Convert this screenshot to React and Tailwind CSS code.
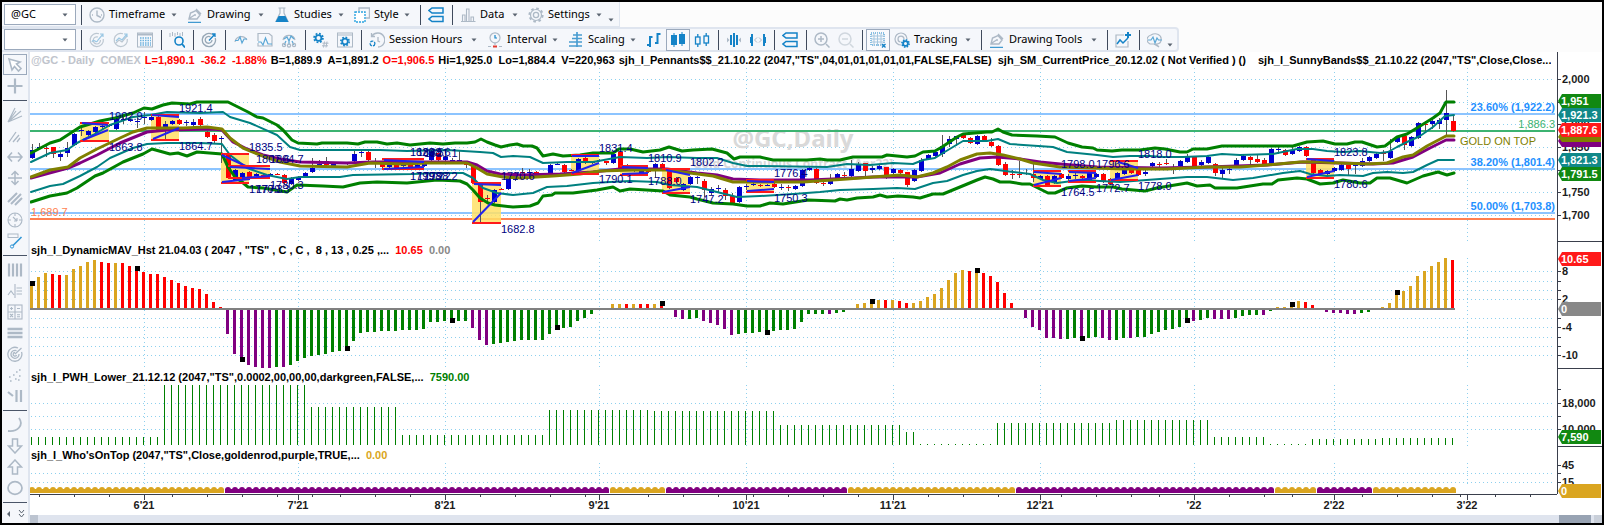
import React from 'react';

const GRAY = '#adb9c6';
const BLUE = '#1583c7';

const icons = {
  clock: (
    <g stroke={GRAY} strokeWidth="1.4">
      <circle cx="8" cy="8" r="7" />
      <path d="M8 3.5V8.5L12 10.5M3 8h1M12 8h1" />
    </g>
  ),
  pen: (
    <g>
      <path d="M2 12L3.5 6L9 3.5L13 8L10 12ZM9 2L14 7M3 11L7.5 8" stroke={GRAY} strokeWidth="1.4" />
      <circle cx="8" cy="8" r="1" fill={GRAY} />
      <path d="M1 15.3H14" stroke={BLUE} />
    </g>
  ),
  flask: (
    <g>
      <path d="M6 1V6L2 14.5H14L10 6V1M4.5 1H11.5" stroke={GRAY} strokeWidth="1.2" />
      <path d="M4.6 9H11.4L14.5 15H1.5Z" fill={BLUE} />
    </g>
  ),
  style: (
    <g>
      <path d="M5 4V1H15.5V11H12" stroke={GRAY} strokeWidth="1.4" />
      <rect x="1" y="5" width="10" height="10" fill="#fff" stroke="#2ba3e0" strokeWidth="1.4" strokeDasharray="2 1" />
    </g>
  ),
  stack: (
    <path d="M4 1H15V6H4L1 3.5ZM4 9.5H15V14.5H4L1 12Z" stroke={BLUE} strokeWidth="1.5" />
  ),
  data: (
    <path d="M1 14.5H15.5M2.5 14V8H5V14M6.5 14V2H9V14M11 14V10H13.5V14" stroke={GRAY} strokeWidth="1.1" />
  ),
  gear: (
    <g stroke={GRAY}>
      <circle cx="8" cy="8" r="6.6" strokeWidth="2" strokeDasharray="2.6 2.58" />
      <circle cx="8" cy="8" r="5.5" strokeWidth="1.2" />
      <circle cx="8" cy="8" r="2.6" strokeWidth="1.3" />
    </g>
  ),
  gauge: (
    <g stroke="#bcc7d1" strokeWidth="1.2">
      <path d="M10 1.8A6.6 6.6 0 1 0 14.3 7" />
      <path d="M9 5A3.6 3.6 0 1 0 11.4 8" />
      <path d="M3 10C5 5 7 13 9 8L14 2M11 2H14V5" stroke="#9cc8e4" />
    </g>
  ),
  gaugeLine: (
    <g stroke="#bcc7d1" strokeWidth="1.2">
      <path d="M10 1.8A6.6 6.6 0 1 0 14.3 7M2 12L6 8L9 10L14 4" />
      <path d="M3 9L6 6L9 8L14 2M11 2H14V5" stroke="#9cc8e4" />
    </g>
  ),
  sheet: (
    <g>
      <rect x="0.5" y="1" width="15" height="14" stroke={GRAY} />
      <path d="M1 2.5H15" stroke={GRAY} strokeWidth="2" />
      <path d="M3 6H14M3 8.5H14M3 11H14M3 13H14" stroke="#6db3de" strokeWidth="1.5" strokeDasharray="1.5 1" />
    </g>
  ),
  findBars: (
    <g>
      <path d="M1 1V5M3.5 0V4M6 1V5M8.5 0V3M11 1V4M13.5 0V4" stroke={GRAY} />
      <circle cx="10" cy="9" r="4" stroke={BLUE} strokeWidth="1.6" />
      <path d="M13 12L16 15.5" stroke={BLUE} strokeWidth="1.8" />
    </g>
  ),
  target: (
    <g stroke="#97a7b6" strokeWidth="1.3">
      <path d="M11 2.2A6.6 6.6 0 1 0 14.2 6" />
      <path d="M9.5 5A3.4 3.4 0 1 0 11 8" />
      <path d="M8 8.5L14 2M11 2L14 2V5" stroke={BLUE} />
    </g>
  ),
  pulse: (
    <g strokeWidth="1.2">
      <path d="M2 10A6.4 6.4 0 0 1 14 8" stroke={GRAY} />
      <path d="M2 8.5H5L7 5L9 11L11 7H14" stroke="#5aa7d6" />
    </g>
  ),
  pulseBox: (
    <g strokeWidth="1.2">
      <path d="M1 9V1.5H12L15 4V14H1V11" stroke={GRAY} />
      <path d="M1 10H4L6 13L8.5 6L11 12H15" stroke="#5aa7d6" />
    </g>
  ),
  pulseNet: (
    <g strokeWidth="1.2">
      <path d="M2 8A6.2 6.2 0 0 1 14 8" stroke={GRAY} />
      <path d="M3 7L6 5L8 9L10 4L13 7M8 9V13M3 13L5 9M13 13L11 9" stroke="#5aa7d6" />
      <circle cx="3" cy="13" r="1.6" stroke={GRAY} />
      <circle cx="8" cy="13.5" r="1.6" stroke={GRAY} />
      <circle cx="13" cy="13" r="1.6" stroke={GRAY} />
    </g>
  ),
  gearHash: (
    <g>
      <circle cx="5.5" cy="6" r="4.4" stroke={BLUE} strokeWidth="1.8" strokeDasharray="1.8 1.65" />
      <circle cx="5.5" cy="6" r="2.9" stroke={BLUE} strokeWidth="1.8" />
      <path d="M11.5 9.5L10.5 15.5M14 9.5L13 15.5M9.5 11.2H15.5M9 13.8H15" stroke={GRAY} />
    </g>
  ),
  gearSheet: (
    <g>
      <rect x="0.5" y="1" width="15" height="14" stroke={GRAY} />
      <path d="M1 3H15" stroke={GRAY} />
      <circle cx="8" cy="9.5" r="4.2" stroke={BLUE} strokeWidth="1.6" strokeDasharray="1.7 1.6" />
      <circle cx="8" cy="9.5" r="2.8" stroke={BLUE} strokeWidth="1.8" />
    </g>
  ),
  session: (
    <g strokeWidth="1.3">
      <path d="M3 4A7 7 0 1 1 9 15M2.5 1V4.5H6" stroke={GRAY} />
      <path d="M9 5V9L11 10" stroke={GRAY} />
      <circle cx="3.5" cy="11.5" r="2.4" stroke={BLUE} strokeDasharray="3 1" />
    </g>
  ),
  interval: (
    <g strokeWidth="1.2">
      <circle cx="8" cy="5.8" r="5" stroke={GRAY} />
      <path d="M8 3V6H10" stroke={BLUE} />
      <path d="M8 11V13M1 14.5H4M12 14.5H15" stroke={GRAY} />
      <path d="M6 14.5H10" stroke="#e23b30" strokeWidth="2" />
    </g>
  ),
  scaling: (
    <g stroke={BLUE} strokeWidth="1.3">
      <path d="M9 0V15" />
      <path d="M5 3H14M4 6.5H14M1 10H14M1 14H14" stroke="#4a9dcf" />
    </g>
  ),
  barsOhlc: (
    <path d="M4 4V15M1 13H4M4 5H6.5M11.5 1V12M9 11H11.5M11.5 2H14.5" stroke={BLUE} strokeWidth="2" />
  ),
  candlesFull: (
    <g stroke={BLUE}>
      <path d="M4 1V15M12 0V14" />
      <rect x="2" y="4" width="4" height="8" fill={BLUE} strokeWidth="2" />
      <rect x="10" y="3" width="4" height="8" fill={BLUE} strokeWidth="2" />
    </g>
  ),
  candlesHollow: (
    <g stroke={BLUE} strokeWidth="1.3">
      <rect x="1.5" y="5" width="4.5" height="7" />
      <rect x="10" y="4" width="4.5" height="7" />
      <path d="M3.8 2V5M3.8 12V15M12.2 1V4M12.2 11V14" />
    </g>
  ),
  squeeze: (
    <g>
      <path d="M5 3V13M8 1V15M11 3V13" stroke={BLUE} strokeWidth="2" />
      <path d="M1 5.5L3.5 8L1 10.5ZM15 5.5L12.5 8L15 10.5Z" fill={GRAY} />
    </g>
  ),
  spread: (
    <g>
      <path d="M2 2V14M14 2V14M0.5 5V11M15.5 5V11" stroke={BLUE} strokeWidth="2" />
      <path d="M7 5.5L4.5 8L7 10.5M9 5.5L11.5 8L9 10.5" stroke={GRAY} />
    </g>
  ),
  zoomIn: (
    <g stroke={GRAY} strokeWidth="1.5">
      <circle cx="7" cy="7" r="6" />
      <path d="M12 12L15.5 15.5M4 7H10M7 4V10" />
    </g>
  ),
  zoomOut: (
    <g stroke="#d0d7de" strokeWidth="1.5">
      <circle cx="7" cy="7" r="6" />
      <path d="M12 12L15.5 15.5M4 7H10" />
    </g>
  ),
  grid: (
    <g>
      <rect x="1" y="1" width="13" height="12" stroke={BLUE} strokeDasharray="1 1" />
      <path d="M4 1V14M7.5 1V14M11 1V14M1 4H15M1 7H15M1 10H15" stroke="#a5c6de" />
      <path d="M12 12L15.5 15.5M15.5 12L12 15.5" stroke={BLUE} strokeWidth="1.3" />
    </g>
  ),
  tracking: (
    <g>
      <path d="M7 13A6 6 0 1 1 13 7M6.5 10A3 3 0 1 1 10 7" stroke={GRAY} strokeWidth="1.2" />
      <circle cx="11.5" cy="11.5" r="3.6" stroke={BLUE} strokeWidth="1.6" strokeDasharray="1.5 1.3" />
      <circle cx="11.5" cy="11.5" r="2.4" stroke={BLUE} strokeWidth="1.8" />
    </g>
  ),
  addChart: (
    <g>
      <path d="M9 3H1V15H13V9" stroke={GRAY} strokeWidth="1.2" />
      <path d="M2 12L5 8L8 11L13 6" stroke={BLUE} strokeWidth="1.5" />
      <path d="M13 0V6M10 3H16" stroke={BLUE} strokeWidth="2" />
    </g>
  ),
  chat: (
    <g strokeWidth="1.2">
      <path d="M3 12A6 5 0 0 1 4 3C9 0 15 3 14 8C14 10 13 12 9 12L12 15L7 12Z" stroke={GRAY} />
      <path d="M1 8H4L6 5L8 11L10 6L11.5 8H15" stroke="#5aa7d6" />
    </g>
  ),
  pointer: (
    <path d="M2 2L13 5L9.5 7L14 11.5L11.5 14L7.5 9.5L5 13Z" fill="#fff" stroke={GRAY} strokeWidth="1.6" />
  ),
  cross: <path d="M8 0.5V15.5M0.5 8H15.5" stroke={GRAY} strokeWidth="2.2" />,
  rays: (
    <path d="M1 15L8 1M1 15L14 4M1 15L15 9M1 15L9 4" stroke={GRAY} strokeWidth="1.2" />
  ),
  fan: <path d="M2 14L9 4M6 14L12 7M10 14L13 10" stroke={GRAY} strokeWidth="1.3" />,
  horiz: <path d="M1 8H15M5 3.5L1 8L5 12.5M11 3.5L15 8L11 12.5" stroke={GRAY} strokeWidth="1.6" />,
  vert: (
    <path d="M8 2V14M4.5 5L8 1.5L11.5 5M4.5 11L8 14.5L11.5 11M1 8H15" stroke={GRAY} strokeWidth="1.5" />
  ),
  parallels: <path d="M1 11L10 2M4 13L14 3M8 14L15 7" stroke={GRAY} strokeWidth="2" />,
  compass: (
    <g stroke={GRAY} strokeWidth="1.1">
      <circle cx="8" cy="8" r="7" />
      <path d="M8 1V4M8 12V15M1 8H4M12 8H15M6 5L10 9M10 9V6M10 9H7" />
    </g>
  ),
  brush: (
    <g>
      <rect x="1" y="1" width="10" height="3.5" stroke={GRAY} />
      <path d="M14.5 4L6 12.5" stroke="#2f95d6" strokeWidth="1.6" />
      <circle cx="5" cy="13.5" r="1.6" stroke="#2f95d6" />
    </g>
  ),
  columns: <path d="M2 1.5V14.5M6 1.5V14.5M10 1.5V14.5M14 1.5V14.5" stroke={GRAY} strokeWidth="2.2" />,
  levels: (
    <path d="M1 12L4 8L7 12M8 1V15M9.5 5H15M9.5 8H15M9.5 11H15" stroke={GRAY} strokeWidth="1.1" />
  ),
  calc: (
    <g stroke={GRAY} strokeWidth="1.1">
      <rect x="1" y="1" width="14" height="14" />
      <path d="M8 1V15M1 8H15M3 4.5H6M4.5 3V6M10 4.5H13M3 10L6 13M6 10L3 13M10 10.7H13M10 12.7H13" />
    </g>
  ),
  rows: <path d="M0.5 4H15.5M0.5 8H15.5M0.5 12H15.5" stroke={GRAY} strokeWidth="2.4" />,
  radar: (
    <g stroke={GRAY} strokeWidth="1.3">
      <path d="M11 2A7 7 0 1 0 14.5 6M9.5 4.6A4 4 0 1 0 12 8" />
      <path d="M8 8L14.5 2M8 6.5A1.8 1.8 0 1 0 9.6 9" />
    </g>
  ),
  dots: (
    <path
      d="M2 10h1.6M3 14h1.6M6 8h1.6M8 12h1.6M9 5h1.6M12 3h1.6M12 9h1.6M11 13h1.6"
      stroke={GRAY}
      strokeWidth="1.6"
    />
  ),
  slashBars: <path d="M1 4L6 8M9.5 2V14M14 2V14" stroke={GRAY} strokeWidth="2.2" />,
  arc: <path d="M12 1C17 8 11 15 1 14" stroke={GRAY} strokeWidth="1.8" />,
  down: <path d="M5.5 1H10.5V8H14.5L8 15L1.5 8H5.5Z" stroke={GRAY} strokeWidth="1.5" />,
  up: <path d="M5.5 15H10.5V8H14.5L8 1L1.5 8H5.5Z" stroke={GRAY} strokeWidth="1.5" />,
  ellipse: <ellipse cx="8" cy="8" rx="7" ry="6.3" stroke={GRAY} strokeWidth="1.7" />,
};

const Icon = ({ name }) => (
  <svg viewBox="0 0 16 16" className="size-4 shrink-0" fill="none" aria-hidden="true">
    {icons[name]}
  </svg>
);

const Caret = () => (
  <svg viewBox="0 0 6 4" className="w-1.5 h-1 shrink-0" aria-hidden="true">
    <path d="M0.5 0.5H5.5L3 3.5Z" fill="#5a6470" />
  </svg>
);

const Sep = () => (
  <div className="w-2 flex justify-center shrink-0">
    <div className="w-px h-5 bg-[#3f4a5c]" />
  </div>
);

const IconButton = ({ name, label, active }) => (
  <button
    type="button"
    aria-label={label}
    className={`w-6 h-[22px] flex items-center justify-center shrink-0 ${
      active ? 'border border-[#9ba9bc] bg-[#f8f9fc]' : ''
    }`}
  >
    <Icon name={name} />
  </button>
);

const MenuButton = ({ name, label, width }) => (
  <button type="button" className={`${width} h-[22px] flex items-center gap-1 pl-1 pr-1.5 shrink-0 whitespace-nowrap`}>
    <Icon name={name} />
    <span>{label}</span>
    <span className="ml-auto">
      <Caret />
    </span>
  </button>
);

const Combo = ({ label, value }) => (
  <div className="relative w-[72px] mr-px shrink-0">
    <select
      aria-label={label}
      defaultValue={value}
      className="block w-full h-[21px] appearance-none border border-[#9ba9bc] bg-white pl-1.5 text-[11px] outline-none"
    >
      <option>{value}</option>
    </select>
    <span className="pointer-events-none absolute right-2 inset-y-0 flex items-center">
      <Caret />
    </span>
  </div>
);

const Overflow = () => (
  <button type="button" aria-label="More" className="w-3 h-[22px] flex items-end pb-1 shrink-0">
    <Caret />
  </button>
);

const BAR = 7;
const barX = (i) => 32 + i * BAR;

const months = [
  [144, "6'21"], [298, "7'21"], [445, "8'21"], [599, "9'21"], [746, "10'21"],
  [893, "11'21"], [1040, "12'21"], [1194, "'22"], [1334, "2'22"], [1467, "3'22"],
];

const weeks = [
  39, 74, 109, 172, 207, 242, 277, 312, 340, 375, 410, 480, 515, 550, 585, 648, 683, 718, 753, 788, 823, 858,
  928, 963, 998, 1061, 1096, 1131, 1159, 1229, 1264, 1292, 1362, 1397, 1432, 1460, 1495, 1530,
];

const bands = [
  { color: '#008080', width: 2, points: '31,162 50,153 67,150 77,143 93,135 110,125 133,117 150,115 167,112 200,113 223,112 230,117 250,123 277,135 290,147 300,150 380,150 407,151 447,150 480,152 493,153 501,157 513,156 530,157 543,163 567,162 593,162 620,157 647,158 667,157 697,158 717,158 733,163 747,166 760,166 827,167 847,164 870,165 893,163 913,164 923,160 935,158 943,153 963,141 987,141 998,139 1010,144 1053,147 1067,152 1097,155 1113,157 1130,156 1150,156 1163,157 1183,157 1207,156 1222,154 1240,155 1273,154 1297,149 1313,149 1327,151 1343,152 1360,151 1380,153 1388,152 1397,147 1407,142 1420,136 1433,127 1445,116 1454,115' },
  { color: '#008080', width: 2, points: '31,192 50,186 63,184 80,176 97,167 110,158 133,148 147,144 167,143 200,143 222,144 230,155 247,168 267,175 287,179 300,177 340,177 353,175 413,174 437,173 463,173 473,178 483,188 497,193 513,195 533,193 547,187 567,186 593,183 610,182 630,181 657,182 670,185 697,187 717,192 737,197 760,196 793,194 820,192 840,190 873,189 897,188 915,189 933,183 947,181 963,175 977,171 990,169 1013,172 1030,174 1043,180 1057,183 1080,180 1120,182 1160,179 1187,177 1207,177 1233,180 1253,178 1283,173 1300,171 1310,174 1327,176 1340,175 1363,176 1373,173 1387,172 1403,173 1413,172 1427,165 1438,160 1454,160' },
  { color: '#800080', width: 3, points: '31,178 68,168 80,163 97,155 120,143 147,132 167,130 213,129 222,130 233,142 247,149 263,155 280,159 300,162 347,163 373,162 427,162 467,162 477,165 487,171 500,174 520,175 560,174 593,172 620,169 667,169 697,173 717,175 733,179 760,180 810,180 833,179 873,177 897,177 917,177 940,173 960,164 980,158 997,157 1020,159 1040,162 1060,164 1097,167 1160,168 1207,167 1267,165 1303,162 1340,163 1373,164 1393,163 1413,157 1430,148 1446,140 1454,140' },
  { color: '#808000', width: 3, points: '31,177 50,170 68,167 80,158 97,149 120,138 133,132 147,128 183,128 207,127 222,129 230,138 243,148 260,155 280,162 300,166 347,167 370,163 403,164 427,163 467,163 477,168 487,174 503,177 520,178 553,176 580,174 600,171 633,170 667,170 690,173 713,176 733,182 760,182 803,182 847,179 873,177 900,175 917,177 933,173 947,167 960,160 977,154 990,153 1003,155 1020,159 1033,163 1060,167 1093,168 1127,169 1167,169 1207,167 1240,167 1267,165 1300,162 1320,162 1340,163 1367,164 1387,163 1403,157 1413,155 1427,146 1446,136 1454,136' },
  { color: '#008000', width: 3, points: '31,153 50,143 60,140 80,127 100,121 115,118 133,113 144,108 152,109 163,105 172,103 190,104 197,102 228,102 240,108 248,112 257,117 263,118 277,125 283,130 292,140 298,143 317,144 322,143 347,143 358,144 365,142 377,142 387,144 397,143 410,145 430,143 443,144 455,143 467,143 475,142 481,139 487,142 495,145 501,147 510,145 517,144 523,146 532,146 537,148 543,156 553,154 563,156 580,155 593,153 613,153 619,149 630,149 643,152 660,150 669,147 682,151 693,150 712,149 727,153 734,159 740,157 760,157 773,160 807,160 820,159 827,160 840,160 853,157 882,157 887,155 907,157 915,156 923,152 935,151 942,147 957,137 963,134 987,132 992,132 998,129 1003,132 1012,135 1037,136 1055,137 1068,143 1082,147 1093,148 1097,150 1112,151 1122,150 1140,150 1155,148 1165,149 1180,152 1187,152 1193,149 1207,149 1222,146 1293,146 1307,142 1323,141 1335,144 1347,144 1355,142 1362,142 1377,147 1385,146 1397,137 1407,134 1417,128 1433,118 1440,113 1446,102 1454,102' },
  { color: '#008000', width: 3, points: '31,202 50,196 67,193 77,188 95,176 103,173 123,162 143,154 152,149 170,154 178,153 187,156 197,152 222,154 228,167 235,177 242,182 248,187 263,188 287,192 297,185 323,186 343,187 360,183 377,182 407,183 437,180 460,181 467,184 473,190 480,198 488,203 495,205 513,207 530,206 538,203 543,196 552,195 555,193 573,193 597,190 613,187 620,191 630,189 663,191 670,195 690,197 697,199 713,203 733,204 747,206 760,206 770,203 783,204 808,200 835,201 840,199 847,200 857,198 873,197 880,195 887,197 898,196 913,197 920,198 933,194 943,194 960,187 977,180 985,177 993,179 1000,182 1010,182 1022,184 1030,184 1040,189 1048,193 1055,193 1067,188 1082,186 1097,187 1113,187 1122,189 1145,191 1157,188 1187,183 1197,186 1210,185 1215,188 1237,188 1263,184 1272,184 1278,180 1297,178 1307,179 1320,184 1333,183 1343,180 1360,183 1370,183 1377,178 1390,178 1407,183 1423,176 1438,172 1447,175 1454,173' },
];

// one entry per bar: direction, body top, body bottom, optional high and low
const candles = [
  'B 150 158 144', 'B 147 147 143 149', 'R 148 148 146 157', 'R 147 154 147 158', 'B 154 157 152 161', 'B 148 153 142 157',
  'B 134 145 133', 'B 130 130 127 136', 'B 131 135', 'B 127 132', 'B 126 127 122 130', 'B 125 126', 'B 118 129', 'B 119 119 115 124',
  'B 120 121', 'B 121 122 117 128', 'B 117 117 112 124', 'B 117 120', 'R 117 130', 'B 124 127 121 140', 'B 121 124', 'R 120 124',
  'B 122 122 120 126', 'B 122 125 119 129', 'R 119 125 117 129', 'R 132 137', 'R 135 141 133 143', 'B 138 138 136 163', 'R 155 178', 'B 170 180',
  'B 173 178', 'R 172 177', 'B 174 176', 'R 175 175', 'B 174 174', 'R 174 174', 'R 175 183', 'B 178 184', 'B 177 180', 'B 173 176',
  'B 168 172 158', 'B 164 165 160', 'R 161 165 157', 'B 164 167', 'B 167 167', 'B 163 164', 'B 154 161 151', 'B 152 152 150 157',
  'R 152 160', 'R 163 164 158 168', 'R 163 167', 'B 164 167', 'R 165 168', 'B 164 166', 'R 164 167', 'B 165 168', 'B 164 166',
  'B 151 160', 'R 153 160', 'B 157 160', 'B 160 160 158 162', 'B 160 160 150 162', 'R 162 165 161 168', 'R 166 183', 'R 183 202 183 223',
  'R 198 198 195 203', 'B 190 202', 'R 189 189', 'B 178 189', 'B 173 180', 'R 172 173 168 177', 'B 172 172 169 175', 'R 172 175', 'B 174 175',
  'B 165 173', 'B 164 164', 'R 165 172', 'R 170 170', 'B 159 171', 'R 158 163', 'B 162 163', 'B 160 161', 'R 161 163 161 165', 'B 154 163',
  'R 152 168', 'R 165 169', 'R 168 171', 'B 171 174', 'R 170 172', 'B 164 168 163 178', 'R 164 169', 'R 170 188', 'R 178 182', 'B 184 190',
  'B 177 184', 'B 177 178 176 184', 'R 181 190 179 197', 'B 189 193 187 195', 'B 188 189 185 192', 'R 190 196 188 200', 'R 196 203 193', 'B 187 202',
  'B 186 186 184 190', 'B 184 185', 'R 185 186', 'B 185 185', 'R 184 187', 'B 187 187 184 190', 'R 187 187 185 191', 'B 186 189',
  'B 170 186', 'B 168 170', 'R 169 183', 'R 183 184 181 186', 'B 181 184 174', 'B 174 178', 'R 175 175 172 178', 'B 169 176 160', 'B 164 171 162',
  'R 163 171 163 176', 'B 168 170 166 173', 'B 166 169', 'R 167 175 167 179', 'B 169 173', 'R 170 173', 'R 172 185 172 187', 'B 170 181',
  'B 160 171 158', 'B 155 159', 'B 152 156', 'B 146 154 135 157', 'B 139 144 136 147', 'B 136 139 136 146', 'R 135 138', 'R 138 143', 'B 136 144',
  'R 136 141', 'R 142 146 138 147', 'R 146 165', 'R 164 175 162', 'R 174 175 170 179', 'R 174 174 161 178', 'R 173 174 169', 'R 174 178 163 182',
  'B 176 179', 'R 176 185', 'B 176 183', 'R 174 178', 'B 176 179 174 182', 'B 175 176 172 179', 'R 176 178', 'B 173 180', 'B 174 177',
  'R 174 182', 'R 179 184', 'B 173 180', 'B 170 174', 'R 168 173', 'R 170 175', 'B 172 174 169 176', 'B 163 166', 'R 164 164 162 167',
  'R 163 164 159', 'R 167 168 164 174', 'B 161 166', 'B 157 162 154', 'R 157 166', 'B 162 165 160', 'B 157 163', 'R 164 173 163 176', 'B 170 174 168 178',
  'B 169 170 167 174', 'B 160 167 158', 'B 156 160', 'R 157 160 156 165', 'R 159 162 154', 'R 160 165 158', 'B 149 163', 'B 149 149 147 154',
  'R 150 155', 'B 150 154 147', 'B 147 151', 'R 147 156', 'R 160 173', 'R 170 174', 'B 171 174', 'B 168 171', 'B 165 170',
  'R 165 169 165 175', 'B 165 166 163 174', 'B 161 166 158', 'B 157 161', 'B 154 158', 'R 153 154 150 161', 'B 151 158 139', 'B 137 142',
  'R 136 145 136 150', 'B 137 146', 'B 123 138', 'R 124 124 121 131', 'B 121 124 117 129', 'B 120 124 118 129', 'B 113 120 90 137', 'R 121 131 115',
].map((row) => row.split(' '));

// box left, right, top, bottom plus the two converging lines
const pennants = [
  [80, 109, 123, 141, 'M82 123L108 125M83 140L108 130'],
  [151, 179, 115, 140, 'M152 115L179 117M153 139L179 128'],
  [221, 249, 154, 183, 'M222 155L250 168M222 182L250 179'],
  [228, 270, 166, 178, 'M230 167L270 169M242 178L270 176'],
  [382, 424, 159, 169, 'M384 160L424 162M384 169L424 167'],
  [472, 501, 183, 223, 'M474 184L501 185M473 222L501 193'],
  [571, 599, 155, 174, 'M572 156L599 156M572 173L599 163'],
  [620, 648, 166, 175, 'M622 167L648 168M622 174L648 173'],
  [662, 690, 169, 193, 'M666 170L690 175M663 192L690 187'],
  [746, 774, 180, 192, 'M747 181L774 182M747 191L774 189'],
  [1033, 1061, 171, 186, 'M1034 172L1061 174M1034 185L1061 178'],
  [1068, 1096, 171, 182, 'M1069 172L1096 173M1069 181L1096 178'],
  [1110, 1138, 161, 180, 'M1118 162L1138 168M1111 180L1138 175'],
  [1306, 1334, 159, 178, 'M1307 159L1334 161M1307 177L1334 171'],
];

const pennantLabels = [
  [109, 120, '1902.9'], [109, 151, '1863.8'], [179, 112, '1921.4'], [179, 150, '1864.7'],
  [249, 151, '1835.5'], [256, 163, '1807.6'], [270, 163, '1804.7'], [249, 193, '1770.3'],
  [256, 193, '1779.3'], [270, 189, '1780.3'], [410, 156, '1829.5'], [417, 156, '1838.6'],
  [424, 157, '1821.1'], [410, 180, '1799.2'], [417, 180, '1798.2'], [424, 180, '1798.2'],
  [501, 180, '1770.6'], [501, 233, '1682.8'], [599, 152, '1831.4'], [599, 183, '1790.1'],
  [648, 162, '1810.9'], [648, 185, '1788.0'], [690, 166, '1802.2'], [690, 203, '1747.2'],
  [774, 177, '1776.4'], [774, 202, '1750.3'], [1061, 168, '1798.0'], [1096, 168, '1796.6'],
  [1061, 196, '1764.5'], [1096, 192, '1772.7'], [1138, 158, '1818.0'], [1138, 190, '1778.0'],
  [1334, 156, '1823.8'], [1334, 188, '1780.6'],
];

const histogram = [
  24, 32, 36, 35, 34, 34, 40, 43, 47, 49, 47, 46, 46, 46, 43, 39, 37, 35, 35, 32, 29, 26, 23, 21, 20, 15, 7, 2,
  -25, -45, -50, -56, -58, -59, -59, -58, -58, -56, -52, -49, -47, -46, -45, -43, -42, -39, -32, -24, -23, -23, -22, -22, -22,
  -21, -21, -21, -20, -13, -13, -12, -12, -12, -12, -19, -31, -36, -35, -34, -33, -32, -31, -31, -31, -31, -25, -20, -19, -18, -12, -9, -5, -1, -1,
  5, 5, 5, 5, 5, 5, 5, 4, -1, -8, -10, -10, -9, -12, -14, -16, -20, -26, -25, -24, -24, -23, -22, -22,
  -21, -21, -20, -13, -5, -5, -5, -5, -4, -3, 1, 5, 6, 6, 9, 9, 9, 8, 6, 6, 8, 12, 15, 21, 29, 36, 39, 38, 37, 36, 33, 27, 16, 6,
  -1, -9, -18, -21, -29, -29, -30, -30, -29, -28, -29, -28, -29, -31, -31, -29, -29, -28, -28, -25, -23,
  -21, -20, -18, -12, -12, -11, -9, -10, -10, -10, -9, -7, -6, -6, -6, -2, 2, 2, 4, 8, 7, 4,
  -1, -3, -4, -4, -5, -5, -4, -3, 1, 2, 6, 14, 18, 23, 33, 38, 43, 47, 52, 49,
];

const histogramColors =
  'YYYRRYYYYYRRYRRRRRRRRRRRRRRR' +
  'PPPPPPPGPGGGGGGGGGGGGGGGG' +
  'GGGGGGGGGGPPPGGGGGGGGGGGGGGGGG' +
  'YYRYRRYRPPPGGPPPPPGGGGGG' +
  'GGGGGGGPGGYYYYYRYRRYYYYYYYYRYRRRRR' +
  'PPPPPPPGGPGGPPGGPGGGG' +
  'GGGGPGGPPPGGGGPGYYYYRRPPPPPPGGYYYYYYYYYYYR';

const palette = { Y: '#daa520', R: '#ff0000', P: '#800080', G: '#008000' };

const markers = [
  [32, 283], [137, 268], [242, 359], [347, 348], [452, 320], [557, 327], [662, 303],
  [767, 332], [872, 301], [977, 270], [1082, 338], [1187, 320], [1292, 304], [1397, 292],
];

// first bar, last bar, height
const pwhRuns = [
  [0, 18, 8], [19, 39, 60], [40, 52, 38], [53, 73, 10], [74, 88, 35], [89, 106, 34], [107, 124, 20], [125, 126, 13],
  [127, 137, 1], [138, 154, 22], [155, 168, 25], [169, 176, 8], [177, 182, 1], [183, 192, 6], [193, 203, 7],
];

const topRuns = [
  [0, 27, 'Y'], [28, 82, 'P'], [83, 90, 'Y'], [91, 116, 'P'], [117, 140, 'Y'],
  [141, 177, 'P'], [178, 183, 'Y'], [184, 191, 'P'], [192, 203, 'Y'],
];

const range = (from, to) => Array.from({ length: to - from + 1 }, (_, k) => from + k);

const Grid = ({ top, bottom, rows }) => (
  <g stroke="#8ed0ee" strokeDasharray="1 3" shapeRendering="crispEdges">
    {rows.map((y) => (
      <line key={y} x1="31" x2="1555" y1={y + 0.5} y2={y + 0.5} />
    ))}
    {months.map(([x]) => (
      <line key={x} x1={x + 0.5} x2={x + 0.5} y1={top} y2={bottom} />
    ))}
  </g>
);

const Flag = ({ y, color, children }) => (
  <g>
    <path d={`M1558 ${y}L1562 ${y - 7}H1601V${y + 7}H1562Z`} fill={color} />
    <text x="1561" y={y + 4} fill="#fff">{children}</text>
  </g>
);

const Ticks = ({ rows, labels }) => (
  <g>
    {rows.map((y) => (
      <path key={y} d={`M1557 ${y + 0.5}H1561`} stroke="#3a3f4c" />
    ))}
    {labels.map(([y, text]) => (
      <text key={text} x="1562" y={y + 4} fill="#1c1c1c">{text}</text>
    ))}
  </g>
);

const Panel = ({ heading, plot, plotBox, plotHeight, axis, axisBox, last }) => (
  <section className="flex">
    <div className="flex-1 min-w-0">
      <div className="h-4 pl-px flex items-center text-[11px] leading-4 font-bold whitespace-pre overflow-hidden">
        {heading}
      </div>
      <svg
        viewBox={plotBox}
        preserveAspectRatio="xMaxYMin slice"
        className={`block w-full ${plotHeight}`}
        fontSize="11"
      >
        {plot}
      </svg>
    </div>
    <div className={`w-[45px] shrink-0 border-l border-[#3a3f4c] ${last ? '' : 'border-b'}`}>
      <svg viewBox={axisBox} className="block w-full overflow-visible" fontSize="11" fontWeight="bold">
        {axis}
      </svg>
    </div>
  </section>
);

const PricePlot = () => (
  <>
    <Grid top={68} bottom={242} rows={[79, 102, 124, 147, 170, 192, 215]} />
    <g fill="#d9d9d9" fontWeight="bold" textAnchor="middle" fontFamily='"Noto Sans", sans-serif'>
      <text x="793" y="147" fontSize="24">@GC,Daily</text>
      <text x="793" y="168" fontSize="12">Gold Continuous Contract [Apr22]</text>
    </g>
    <g strokeWidth="2">
      <path d="M30 114H1555M30 169H1555M30 213H1555" stroke="#8cc4ff" />
      <path d="M30 131H1555" stroke="#3cb371" />
      <path d="M30 219H1555" stroke="#ff7f50" />
    </g>
    {pennants.map(([l, r, t, b]) => (
      <rect key={l} x={l} y={t} width={r - l} height={b - t} fill="#ffe066" fillOpacity="0.85" />
    ))}
    <g shapeRendering="crispEdges">
      {candles.map(([dir, top, bottom, high, low], i) => {
        const x = barX(i);
        const t = Number(top);
        const b = Number(bottom);
        const hi = Number(high || t - 1);
        const lo = Number(low || b + 1);
        return (
          <g key={i}>
            <rect x={x} y={hi} width="1" height={lo - hi} fill="#555" />
            <rect x={x - 2} y={t} width="5" height={Math.max(b - t, 1)} fill={dir === 'B' ? '#0000d0' : '#ff0000'} />
          </g>
        );
      })}
    </g>
    {bands.map((band, i) => (
      <polyline
        key={i}
        points={band.points}
        fill="none"
        stroke={band.color}
        strokeWidth={band.width}
        strokeLinejoin="round"
        strokeLinecap="round"
      />
    ))}
    {pennants.map(([l, r, t, b, lines]) => (
      <g key={l} fill="none" strokeWidth="2">
        <path d={`M${l} ${t}H${r}M${l} ${b}H${r}`} stroke="#ff1a1a" />
        <path d={lines} stroke="#2222ee" />
      </g>
    ))}
    <g fill="#000080">
      {pennantLabels.map(([x, y, text], i) => (
        <text key={i} x={x} y={y}>{text}</text>
      ))}
    </g>
    <text x="31" y="216" fill="#ff7f50">1,689.7</text>
    <g textAnchor="end" fill="#1e90ff">
      <g fontWeight="bold">
        <text x="1555" y="111">23.60% (1,922.2)</text>
        <text x="1555" y="166">38.20% (1,801.4)</text>
        <text x="1555" y="210">50.00% (1,703.8)</text>
      </g>
      <text x="1555" y="128" fill="#3cb371">1,886.3</text>
    </g>
    <text x="1460" y="145" fill="#808000">GOLD ON TOP</text>
  </>
);

const PriceAxis = () => (
  <>
    <Ticks
      rows={[79, 102, 124, 147, 170, 192, 215]}
      labels={[[79, '2,000'], [124, '1,900'], [147, '1,850'], [192, '1,750'], [215, '1,700']]}
    />
    <path d="M1558 141L1562 135H1601V147H1562Z" fill="#800080" />
    <path d="M1558 137L1562 131H1601V142H1562Z" fill="#808000" />
    <Flag y={101} color="#118811">1,951</Flag>
    <Flag y={115} color="#118888">1,921.3</Flag>
    <Flag y={130} color="#ff1a1a">1,887.6</Flag>
    <Flag y={160} color="#118888">1,821.3</Flag>
    <Flag y={174} color="#118811">1,791.5</Flag>
  </>
);

const HistogramPlot = () => (
  <>
    <Grid top={258} bottom={369} rows={[271, 281, 290, 299, 318, 327, 337, 346, 355]} />
    <g shapeRendering="crispEdges">
      {histogram.map((v, i) => (
        <rect
          key={i}
          x={barX(i) - 2}
          y={v > 0 ? 309 - v : 309}
          width="3"
          height={Math.abs(v)}
          fill={palette[histogramColors[i]]}
        />
      ))}
      <rect x="30" y="308" width="1425" height="2" fill="#808080" />
      {markers.map(([x, y]) => (
        <rect key={x} x={x - 2} y={y - 2} width="5" height="5" fill="#000" />
      ))}
    </g>
  </>
);

const PwhPlot = () => (
  <>
    <Grid top={385} bottom={447} rows={[403, 416, 429]} />
    <g fill="#008000" shapeRendering="crispEdges">
      {pwhRuns.flatMap(([from, to, h]) =>
        range(from, to).map((i) => <rect key={i} x={barX(i) - 1} y={445 - h} width="1" height={h} />)
      )}
    </g>
  </>
);

const TopPlot = () => (
  <>
    <Grid top={463} bottom={487} rows={[473, 482]} />
    {topRuns.map(([from, to, c]) => (
      <g key={from} fill={palette[c]}>
        <rect x={barX(from) - 3} y="489" width={(to - from) * BAR + 6} height="4" />
        {range(from, to).map((i) => (
          <circle key={i} cx={barX(i)} cy="490" r="3" />
        ))}
      </g>
    ))}
  </>
);

const drawingTools = [
  [['pointer', 'Pointer'], ['cross', 'Crosshair']],
  [
    ['rays', 'Ray'], ['fan', 'Fan'], ['horiz', 'Horizontal line'], ['vert', 'Vertical line'],
    ['parallels', 'Parallel lines'], ['compass', 'Andrews pitchfork'], ['brush', 'Trendline'],
  ],
  [
    ['columns', 'Time cycles'], ['levels', 'Retracement'], ['calc', 'Gann square'], ['rows', 'Extensions'],
    ['radar', 'Arcs'], ['dots', 'Regression'], ['slashBars', 'Time zones'],
  ],
  [['arc', 'Arc'], ['down', 'Arrow down'], ['up', 'Arrow up'], ['ellipse', 'Ellipse']],
];

const App = () => {
  return (
    <div className="bg-white border-2 border-black text-black font-['Liberation_Sans',Arial,sans-serif] overflow-hidden">
      <header className="bg-[#fcfcfc] text-[11px] font-['Noto_Sans',sans-serif]">
        <div className="w-[618px] h-[25px] flex items-center pl-0.5 pt-px bg-[#f5f7fb] border-b border-r border-[#dfe5ef]">
          <Combo label="Symbol" value="@GC" />
          <Sep />
          <MenuButton name="clock" label="Timeframe" width="w-[98px]" />
          <MenuButton name="pen" label="Drawing" width="w-[87px]" />
          <MenuButton name="flask" label="Studies" width="w-[80px]" />
          <MenuButton name="style" label="Style" width="w-[66px]" />
          <Sep />
          <IconButton name="stack" label="Layers" />
          <Sep />
          <MenuButton name="data" label="Data" width="w-[68px]" />
          <MenuButton name="gear" label="Settings" width="w-[84px]" />
          <Overflow />
        </div>
        <div className="w-[1177px] h-[25px] flex items-center pl-0.5 bg-[#f5f7fb] border-y-2 border-r-2 border-[#dfe5ef] rounded-r">
          <Combo label="Interval" value="" />
          <Sep />
          <IconButton name="gauge" label="Scanner" />
          <IconButton name="gaugeLine" label="Trend" />
          <IconButton name="sheet" label="Data sheet" />
          <Sep />
          <IconButton name="findBars" label="Find bars" />
          <Sep />
          <IconButton name="target" label="Target" />
          <Sep />
          <IconButton name="pulse" label="Pulse" />
          <IconButton name="pulseBox" label="Pulse chart" />
          <IconButton name="pulseNet" label="Pulse network" />
          <Sep />
          <IconButton name="gearHash" label="Format" />
          <IconButton name="gearSheet" label="Window settings" />
          <Sep />
          <MenuButton name="session" label="Session Hours" width="w-[118px]" />
          <MenuButton name="interval" label="Interval" width="w-[81px]" />
          <MenuButton name="scaling" label="Scaling" width="w-[78px]" />
          <IconButton name="barsOhlc" label="OHLC bars" />
          <IconButton name="candlesFull" label="Candlesticks" active />
          <IconButton name="candlesHollow" label="Hollow candlesticks" />
          <Sep />
          <IconButton name="squeeze" label="Decrease spacing" />
          <IconButton name="spread" label="Increase spacing" />
          <Sep />
          <IconButton name="stack" label="Panes" />
          <Sep />
          <IconButton name="zoomIn" label="Zoom in" />
          <IconButton name="zoomOut" label="Zoom out" />
          <Sep />
          <IconButton name="grid" label="Grid" active />
          <MenuButton name="tracking" label="Tracking" width="w-[87px]" />
          <Sep />
          <MenuButton name="pen" label="Drawing Tools" width="w-[118px]" />
          <Sep />
          <IconButton name="addChart" label="Add chart" />
          <Sep />
          <IconButton name="chat" label="Chat" />
          <Overflow />
        </div>
      </header>

      <div className="flex">
        <nav className="w-7 shrink-0 flex flex-col items-center pt-0.5 bg-[#f5f7fb] border-r-2 border-[#dfe5ef]">
          {drawingTools.map((group, g) => (
            <React.Fragment key={g}>
              {group.map(([name, label]) => (
                <button
                  key={name}
                  type="button"
                  aria-label={label}
                  className={`w-6 h-[21px] flex items-center justify-center ${
                    name === 'pointer' ? 'border border-[#9ba9bc]' : ''
                  }`}
                >
                  <Icon name={name} />
                </button>
              ))}
              <div className="h-2 w-6 flex items-center">
                <div className="w-full h-px bg-[#4a5568]" />
              </div>
            </React.Fragment>
          ))}
          <button type="button" aria-label="More tools" className="w-6 h-4 flex items-center justify-center">
            <svg viewBox="0 0 20 10" className="w-5 h-2.5" fill="none" aria-hidden="true">
              <path d="M5 2V8L2 5Z" fill="#5a6470" />
              <path d="M14 1L16.5 4L19 1M14 5L16.5 8L19 5" stroke="#5a6470" />
            </svg>
          </button>
        </nav>

        <main className="flex-1 min-w-0">
          <Panel
            heading={
              <div className="flex gap-1 overflow-hidden">
                <span className="text-[#c0c4cc]">@GC - Daily  COMEX</span>
                <span className="text-[#ff0000]">L=1,890.1  -36.2  -1.88%</span>
                <span>B=1,889.9  A=1,891.2</span>
                <span className="text-[#ff0000]">O=1,906.5</span>
                <span>Hi=1,925.0  Lo=1,884.4  V=220,963</span>
                <span>sjh_I_Pennants$$_21.10.22 (2047,"TS",04,01,01,01,01,01,FALSE,FALSE)</span>
                <span className="pl-0.5">sjh_SM_CurrentPrice_20.12.02 ( Not Verified ) ()</span>
                <span className="pl-2">sjh_I_SunnyBands$$_21.10.22 (2047,"TS",Close,Close...</span>
              </div>
            }
            plot={<PricePlot />}
            plotBox="30 68 1527 174"
            plotHeight="h-[174px]"
            axis={<PriceAxis />}
            axisBox="1558 52 44 189"
          />
          <Panel
            heading={
              <>
                {'sjh_I_DynamicMAV_Hst 21.04.03 ( 2047 , "TS" , C , C ,  8 , 13 , 0.25 ,...  '}
                <span className="text-[#ff0000]">10.65  </span>
                <span className="text-[#888]">0.00</span>
              </>
            }
            plot={<HistogramPlot />}
            plotBox="30 258 1527 111"
            plotHeight="h-[111px]"
            axis={
              <>
                <Ticks
                  rows={[271, 281, 290, 299, 318, 327, 337, 346, 355]}
                  labels={[[271, '8'], [299, '2'], [327, '-4'], [355, '-10']]}
                />
                <Flag y={259} color="#ff1a1a">10.65</Flag>
                <Flag y={309} color="#888888">0</Flag>
              </>
            }
            axisBox="1558 242 44 126"
          />
          <Panel
            heading={
              <>
                {'sjh_I_PWH_Lower_21.12.12 (2047,"TS",0.0002,00,00,00,darkgreen,FALSE,...  '}
                <span className="text-[#008000]">7590.00</span>
              </>
            }
            plot={<PwhPlot />}
            plotBox="30 385 1527 62"
            plotHeight="h-[62px]"
            axis={
              <>
                <Ticks rows={[389, 403, 416, 429]} labels={[[403, '18,000'], [429, '10,000']]} />
                <Flag y={437} color="#118811">7,590</Flag>
              </>
            }
            axisBox="1558 369 44 77"
          />
          <Panel
            heading={
              <>
                {'sjh_I_Who\'sOnTop (2047,"TS",Close,goldenrod,purple,TRUE,...  '}
                <span className="text-[#daa520]">0.00</span>
              </>
            }
            plot={<TopPlot />}
            plotBox="30 463 1527 31"
            plotHeight="h-[31px]"
            axis={
              <>
                <Ticks rows={[465, 473, 482]} labels={[[465, '45'], [482, '15']]} />
                <Flag y={491} color="#daa520">0</Flag>
              </>
            }
            axisBox="1558 447 44 47"
            last
          />
          <div className="flex">
            <svg
              viewBox="30 494 1527 21"
              preserveAspectRatio="xMaxYMin slice"
              className="block flex-1 min-w-0 h-[21px]"
              fontSize="11"
              fontWeight="bold"
              textAnchor="middle"
            >
              <path d="M30 494.5H1557" stroke="#3a3f4c" />
              {weeks.map((x) => (
                <path key={x} d={`M${x + 0.5} 494V497`} stroke="#3a3f4c" />
              ))}
              {months.map(([x, text]) => (
                <g key={x}>
                  <path d={`M${x + 0.5} 494V500`} stroke="#3a3f4c" />
                  <text x={x} y="509" fill="#1c1c1c">{text}</text>
                </g>
              ))}
            </svg>
            <div className="w-[45px] shrink-0" />
          </div>
          <div className="h-2 flex bg-[#dfe4ee]">
            <div className="w-2 bg-[#bcc4d0]" />
            <div className="flex-1" />
            <div className="w-8 mr-[3px] bg-[#98a3b3]" />
            <div className="w-2 bg-[#c9cfd9]" />
          </div>
        </main>
      </div>
    </div>
  );
};

export default App;
